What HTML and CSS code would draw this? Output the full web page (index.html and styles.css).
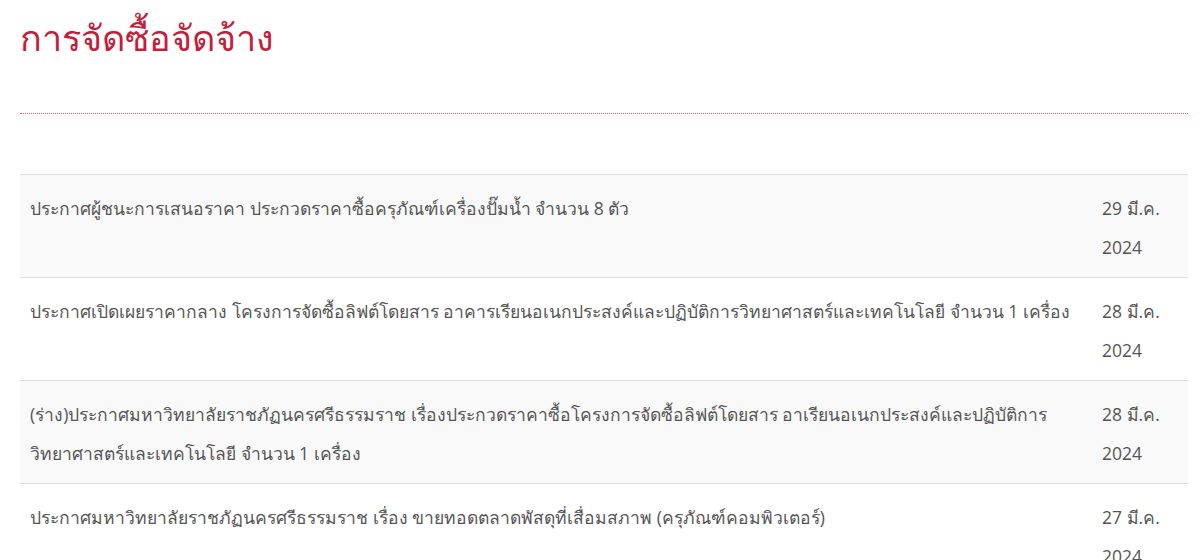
FILE: index.html
```html
<!DOCTYPE html>
<html lang="th">
<head>
  <meta charset="UTF-8" />
  <meta name="viewport" content="width=device-width, initial-scale=1.0"/>
  <title>การจัดซื้อจัดจ้าง</title>
  <link rel="stylesheet" href="styles.css">
</head>
<body>

  <div class="content">
    <h1 class="page-title">การจัดซื้อจัดจ้าง</h1>
    <div class="title-rule"></div>

    <table class="news-table">
      <tbody>
        <tr>
          <td class="news-title">ประกาศผู้ชนะการเสนอราคา ประกวดราคาซื้อครุภัณฑ์เครื่องปั๊มน้ำ จำนวน 8 ตัว</td>
          <td class="news-date">29 มี.ค. 2024</td>
        </tr>
        <tr>
          <td class="news-title">ประกาศเปิดเผยราคากลาง โครงการจัดซื้อลิฟต์โดยสาร อาคารเรียนอเนกประสงค์และปฏิบัติการวิทยาศาสตร์และเทคโนโลยี จำนวน 1 เครื่อง</td>
          <td class="news-date">28 มี.ค. 2024</td>
        </tr>
        <tr>
          <td class="news-title">(ร่าง)ประกาศมหาวิทยาลัยราชภัฏนครศรีธรรมราช เรื่องประกวดราคาซื้อโครงการจัดซื้อลิฟต์โดยสาร อาเรียนอเนกประสงค์และปฏิบัติการ วิทยาศาสตร์และเทคโนโลยี จำนวน 1 เครื่อง</td>
          <td class="news-date">28 มี.ค. 2024</td>
        </tr>
        <tr>
          <td class="news-title">ประกาศมหาวิทยาลัยราชภัฏนครศรีธรรมราช เรื่อง ขายทอดตลาดพัสดุที่เสื่อมสภาพ (ครุภัณฑ์คอมพิวเตอร์)</td>
          <td class="news-date">27 มี.ค. 2024</td>
        </tr>
      </tbody>
    </table>
  </div>

</body>
</html>
```

FILE: styles.css
```css
* { margin: 0; padding: 0; box-sizing: border-box; }
body {
  background: #fff;
  font-family: "Open Sans", "Noto Sans", sans-serif;
  color: #555;
  overflow: hidden;
}

.content {
  margin: 0 12px 0 20px;
  padding-top: 13px;
}

.page-title {
  font-size: 36px;
  font-weight: 500;
  color: #c41e3a;
  line-height: 50px;
}

/* dotted red rule under the heading */
.title-rule {
  margin-top: 50px;
  margin-bottom: 60px;
  border-top: 1px dotted #e05a70;
}

.news-table {
  width: 100%;
  border-collapse: collapse;
  font-size: 17.5px;
}

.news-table td {
  padding: 14px 10px 10px;
  line-height: 39px;
  vertical-align: top;
  border-top: 1px solid #ddd;
}

.news-table tr:nth-child(odd) {
  background: #f9f9f9;
}

.news-date {
  width: 96px;
}
```
